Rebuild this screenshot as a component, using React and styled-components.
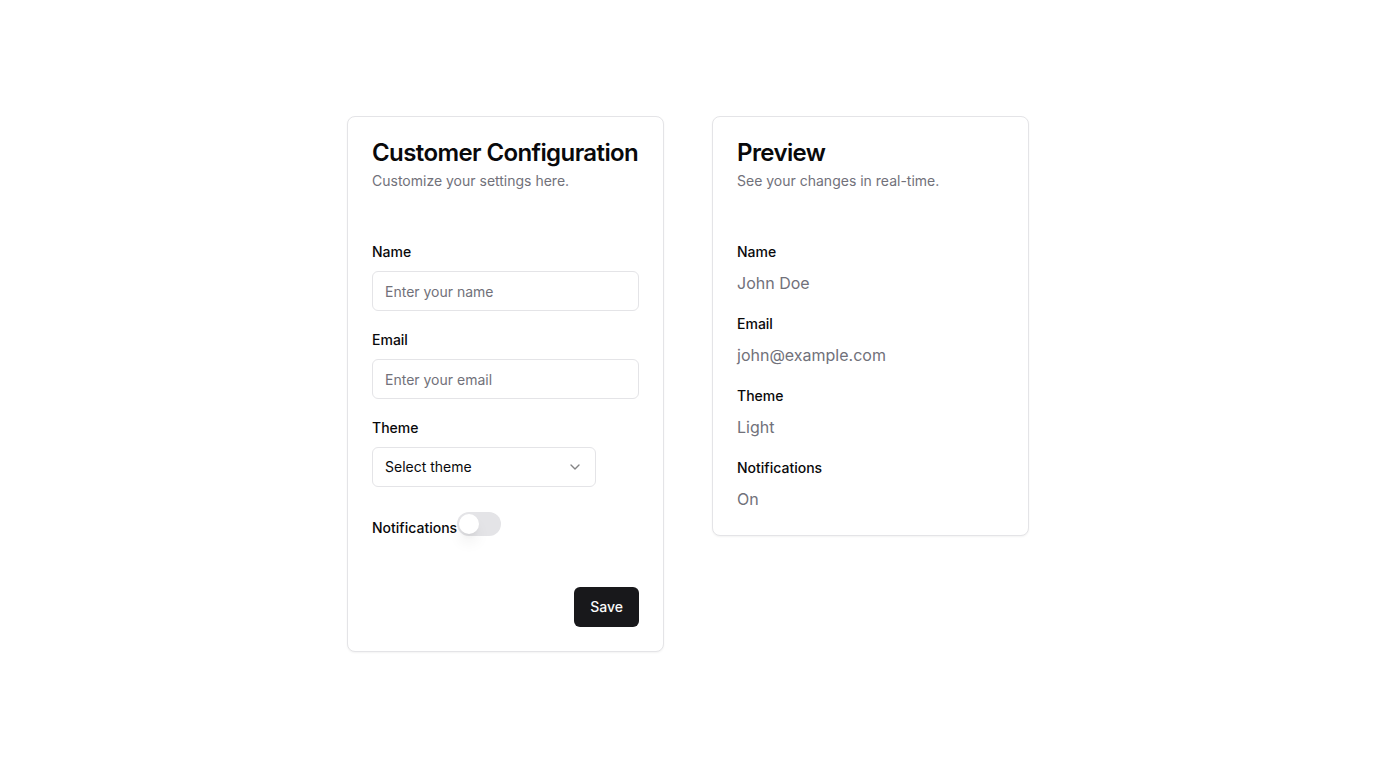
import React from "react";
import styled, { createGlobalStyle } from "styled-components";
import { ChevronDown } from "lucide-react";

const Global = createGlobalStyle`
  * { box-sizing: border-box; }
  html, body { margin: 0; padding: 0; background: #ffffff; }
  body {
    font-family: Inter, "Noto Sans", sans-serif;
    font-size: 16px;
    line-height: 24px;
    color: #09090b;
  }
`;

const Page = styled.div`
  min-height: 768px;
  display: flex;
  align-items: flex-start;
  justify-content: center;
  gap: 48px;
  padding-top: 116px;
`;

const Card = styled.div`
  width: 317px;
  border: 1px solid #e4e4e7;
  border-radius: 8px;
  background: #fff;
  box-shadow: 0 1px 2px 0 rgba(0, 0, 0, 0.05);
  padding: 24px;
  display: flex;
  flex-direction: column;
`;

const Title = styled.h2`
  margin: 0;
  font-size: 24px;
  line-height: 24px;
  font-weight: 600;
  letter-spacing: -0.6px;
  white-space: nowrap;
`;

const Subtitle = styled.p`
  margin: 6px 0 0;
  font-size: 14px;
  line-height: 20px;
  color: #71717a;
`;

const Body = styled.div`
  margin-top: 48px;
  display: flex;
  flex-direction: column;
  gap: 16px;
`;

const Field = styled.div`
  display: flex;
  flex-direction: column;
  gap: 8px;
`;

const Label = styled.label`
  font-size: 14px;
  line-height: 24px;
  padding-top: 1px;
  margin-bottom: -1px;
  font-weight: 500;
  color: #09090b;
`;

const Input = styled.input`
  height: 40px;
  width: 100%;
  border: 1px solid #e4e4e7;
  border-radius: 6px;
  padding: 0 12px;
  font-family: inherit;
  font-size: 14px;
  color: #09090b;
  background: #fff;
  outline: none;
  &::placeholder { color: #71717a; }
`;

const SelectTrigger = styled.button`
  height: 40px;
  width: 224px;
  border: 1px solid #e4e4e7;
  border-radius: 6px;
  padding: 0 12px 1px;
  background: #fff;
  display: flex;
  align-items: center;
  justify-content: space-between;
  font-family: inherit;
  font-size: 14px;
  color: #09090b;
  cursor: pointer;
  svg { opacity: 0.5; margin-top: 1px; }
`;

const SwitchRow = styled.div`
  margin-top: 25px;
  display: flex;
  align-items: flex-start;
`;

const SwitchLabel = styled(Label)`
  margin-top: 3px;
`;

const SwitchTrack = styled.button`
  width: 44px;
  height: 24px;
  border-radius: 999px;
  border: 2px solid transparent;
  background: ${(p) => (p.$on ? "#18181b" : "#e4e4e7")};
  padding: 0;
  display: inline-flex;
  align-items: center;
  cursor: pointer;
`;

const Thumb = styled.span`
  width: 20px;
  height: 20px;
  border-radius: 999px;
  background: #fff;
  box-shadow: 0 10px 15px -3px rgba(0, 0, 0, 0.1), 0 4px 6px -4px rgba(0, 0, 0, 0.1);
  transform: translateX(${(p) => (p.$on ? "20px" : "0")});
`;

const Footer = styled.div`
  margin-top: 48px;
  display: flex;
  justify-content: flex-end;
`;

const Button = styled.button`
  height: 40px;
  padding: 0 16px 1px;
  border: none;
  border-radius: 6px;
  background: #18181b;
  color: #fafafa;
  font-family: inherit;
  font-size: 14px;
  font-weight: 500;
  cursor: pointer;
`;

const Value = styled.div`
  font-size: 16px;
  line-height: 24px;
  color: #71717a;
`;

export default function App() {
  return (
    <>
      <Global />
      <Page>
        <Card>
          <Title>Customer Configuration</Title>
          <Subtitle>Customize your settings here.</Subtitle>
          <Body>
            <Field>
              <Label>Name</Label>
              <Input placeholder="Enter your name" />
            </Field>
            <Field>
              <Label>Email</Label>
              <Input placeholder="Enter your email" />
            </Field>
            <Field>
              <Label>Theme</Label>
              <SelectTrigger>
                <span>Select theme</span>
                <ChevronDown size={16} />
              </SelectTrigger>
            </Field>
          </Body>
          <SwitchRow>
            <SwitchLabel>Notifications</SwitchLabel>
            <SwitchTrack $on={false}>
              <Thumb $on={false} />
            </SwitchTrack>
          </SwitchRow>
          <Footer>
            <Button>Save</Button>
          </Footer>
        </Card>
        <Card>
          <Title>Preview</Title>
          <Subtitle>See your changes in real-time.</Subtitle>
          <Body>
            <Field>
              <Label>Name</Label>
              <Value>John Doe</Value>
            </Field>
            <Field>
              <Label>Email</Label>
              <Value>john@example.com</Value>
            </Field>
            <Field>
              <Label>Theme</Label>
              <Value>Light</Value>
            </Field>
            <Field>
              <Label>Notifications</Label>
              <Value>On</Value>
            </Field>
          </Body>
        </Card>
      </Page>
    </>
  );
}
